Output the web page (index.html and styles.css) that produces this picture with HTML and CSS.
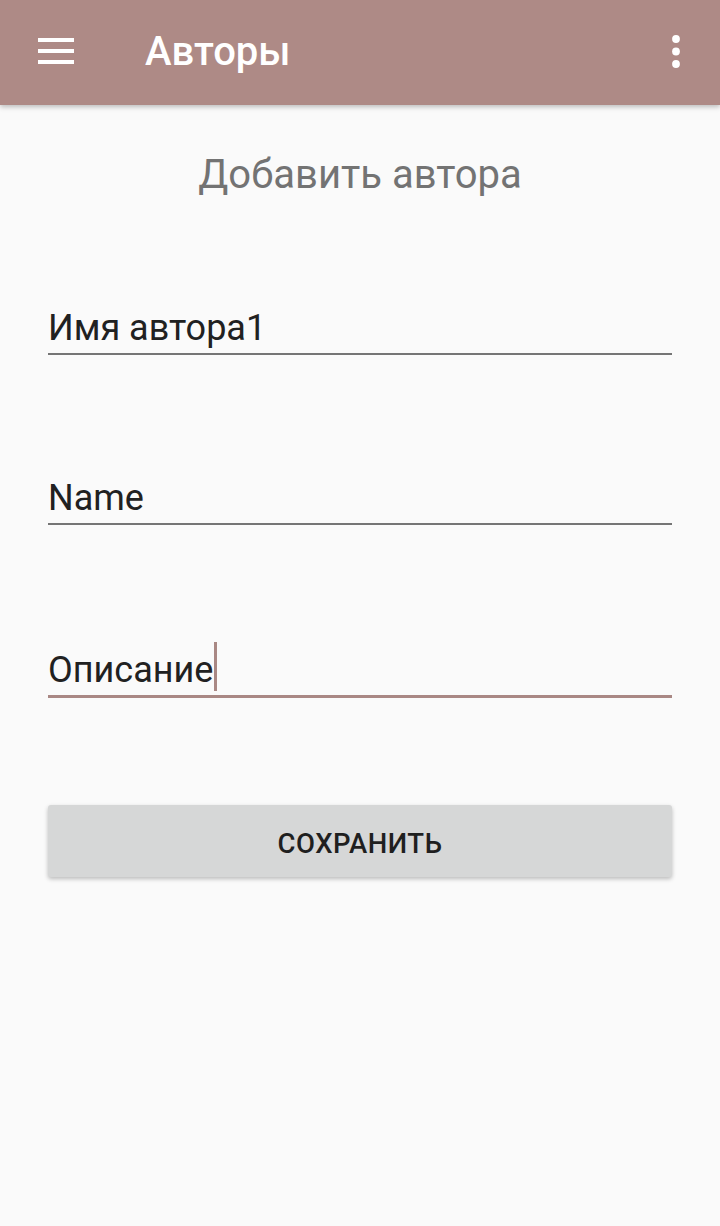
FILE: index.html
```html
<!DOCTYPE html>
<html lang="ru">
<head>
<meta charset="utf-8">
<title>Авторы</title>
<link rel="stylesheet" href="styles.css">
</head>
<body>
<header class="appbar">
  <svg class="menu" width="36" height="26" viewBox="0 0 36 26"><rect x="0" y="0" width="36" height="4" fill="#fff"/><rect x="0" y="11" width="36" height="4" fill="#fff"/><rect x="0" y="22" width="36" height="4" fill="#fff"/></svg>
  <h1 class="title">Авторы</h1>
  <svg class="more" width="8" height="33" viewBox="0 0 8 33"><circle cx="4" cy="4" r="3.9" fill="#fff"/><circle cx="4" cy="16.5" r="3.9" fill="#fff"/><circle cx="4" cy="29" r="3.9" fill="#fff"/></svg>
</header>
<main class="content">
  <h2 class="subtitle">Добавить автора</h2>
  <div class="field first"><span class="value">Имя автора1</span></div>
  <div class="field"><span class="value">Name</span></div>
  <div class="field focused"><span class="value">Описание</span><span class="cursor"></span></div>
  <button class="save">СОХРАНИТЬ</button>
</main>
</body>
</html>
```
FILE: styles.css
```css
html, body { margin: 0; padding: 0; }
body {
  background: #fafafa;
  font-family: Roboto, "Noto Sans", sans-serif;
  width: 720px;
  height: 1226px;
  overflow: hidden;
}
.appbar {
  height: 105px;
  background: #ae8a86;
  display: flex;
  align-items: center;
  padding: 0 40px 0 38px;
  box-shadow: 0 2px 5px rgba(0,0,0,0.25);
  position: relative;
  z-index: 1;
}
.menu { display: block; margin-top: -4px; }
.title {
  margin: -2px 0 0 71px;
  flex: 1;
  color: #fff;
  font-size: 40px;
  font-weight: 500;
}
.more { display: block; margin-top: -3px; }
.content {
  padding: 0 48px;
  display: flex;
  flex-direction: column;
}
.subtitle {
  margin: 46px 0 0 0;
  text-align: center;
  font-weight: 400;
  font-size: 40px;
  color: #737373;
  line-height: 48px;
}
.field {
  display: flex;
  align-items: flex-end;
  height: 58px;
  border-bottom: 2px solid #757575;
  margin-top: 110px;
}
.field.first { margin-top: 96px; }
.value {
  font-size: 36px;
  color: #212121;
  line-height: 40px;
  padding-bottom: 5px;
}
.field.focused {
  border-bottom: 3px solid #a98884;
  height: 58px;
  margin-top: 112px;
}
.cursor {
  display: inline-block;
  width: 3px;
  height: 49px;
  background: #a98884;
  margin-bottom: 4px;
  margin-left: 1px;
}
.save {
  margin-top: 107px;
  height: 72px;
  padding: 4px 0 0 0;
  border: none;
  border-radius: 3px;
  background: #d6d7d7;
  box-shadow: 0 2px 4px rgba(0,0,0,0.25);
  font-family: Roboto, sans-serif;
  font-weight: 500;
  font-size: 27.5px;
  color: #1f1f1f;
  letter-spacing: 0.5px;
}
```
